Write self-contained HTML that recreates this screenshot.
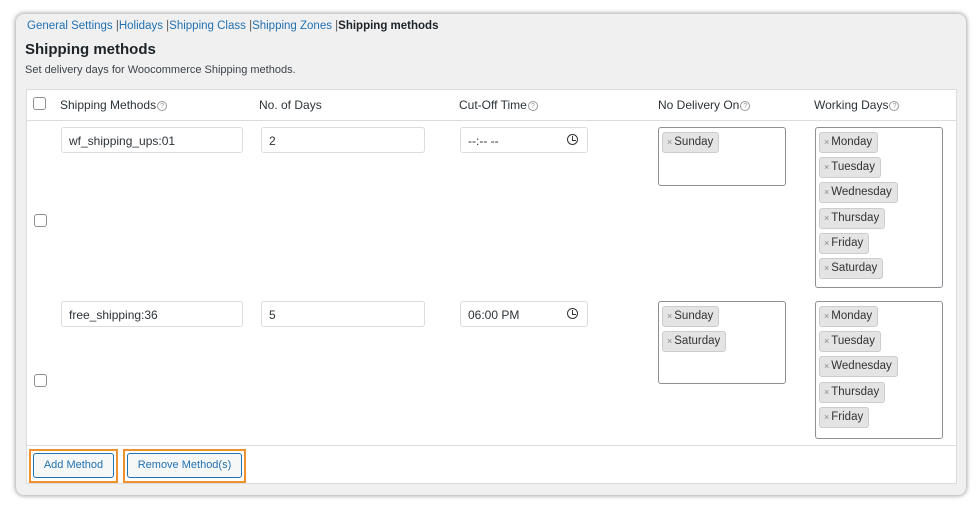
<!DOCTYPE html>
<html><head><meta charset="utf-8"><style>
*{box-sizing:border-box;margin:0;padding:0}
body{width:980px;height:508px;background:#fff;font-family:"Liberation Sans",sans-serif;position:relative;overflow:hidden;color:#1d2327}
.frame{position:absolute;left:16px;top:14px;width:950px;height:481px;background:#f0f0f1;border-radius:8px;box-shadow:0 0 4px 1px rgba(0,0,0,.35)}
.a{position:absolute;white-space:nowrap}
.nav{left:27px;top:20px;font-size:11.5px;color:#555}
.nav span{color:#2271b1}
.nav b{color:#1d2327}
.tbl{position:absolute;left:26px;top:89px;width:931px;height:395px;background:#fff;border:1px solid #dcdcde}
.hl{position:absolute;left:26px;width:931px;height:1px;background:#dcdcde}
.th{font-size:12px;top:98px;color:#2c3338}
.q{display:inline-block;width:10px;height:10px;border:1px solid #999;border-radius:50%;font-size:7px;line-height:9px;text-align:center;color:#999;vertical-align:1px;margin-left:1px}
.cb{position:absolute;width:13px;height:13px;border:1px solid #8c8f94;border-radius:3px;background:#fff}
.in{position:absolute;height:26px;border:1px solid #dcdcde;border-radius:3px;font-size:12px;padding:6px 7px;color:#2c3338;background:#fff}
.sel{position:absolute;border:1px solid #8c8f94;border-radius:3px;background:#fff;padding:4px 0 0 3px}
.tag{display:block;width:max-content;height:21px;margin-bottom:4.2px;background:#e4e4e4;border:1px solid #ccc;border-radius:3px;font-size:11.5px;line-height:19px;padding:0 5px 0 4px;color:#333}
.tag i{font-style:normal;color:#888;font-size:9px;margin-right:2px}
.btn{position:absolute;border:2px solid #f0912f}
.btn div{border:1px solid #2271b1;border-radius:3px;color:#2271b1;font-size:11px;height:25px;line-height:23px;text-align:center;background:#f6f7f7;margin:2px}
.clk{position:absolute;right:9px;top:6px;width:11px;height:11px;border:1.5px solid #333;border-radius:50%}
.clk:after{content:"";position:absolute;left:3.5px;top:1px;width:3px;height:3.5px;border-left:1.3px solid #333;border-bottom:1.3px solid #333}
</style></head><body>
<div class="frame"></div>
<div class="a nav"><span>General Settings</span> |<span>Holidays</span> |<span>Shipping Class</span> |<span>Shipping Zones</span> |<b>Shipping methods</b></div>
<div class="a" style="left:25px;top:41px;font-size:15px;font-weight:bold">Shipping methods</div>
<div class="a" style="left:25px;top:64px;font-size:11px;color:#3c434a">Set delivery days for Woocommerce Shipping methods.</div>
<div class="tbl"></div>
<div class="hl" style="top:120px"></div>
<div class="hl" style="top:445px"></div>
<div class="cb" style="left:33px;top:97px"></div>
<div class="a th" style="left:60px">Shipping Methods<span class="q">?</span></div>
<div class="a th" style="left:259px">No. of Days</div>
<div class="a th" style="left:459px">Cut-Off Time<span class="q">?</span></div>
<div class="a th" style="left:658px">No Delivery On<span class="q">?</span></div>
<div class="a th" style="left:814px">Working Days<span class="q">?</span></div>

<div class="cb" style="left:34px;top:214px"></div>
<div class="in" style="left:61px;top:127px;width:182px">wf_shipping_ups:01</div>
<div class="in" style="left:261px;top:127px;width:164px">2</div>
<div class="in" style="left:460px;top:127px;width:128px">--:-- --<span class="clk"></span></div>
<div class="sel" style="left:658px;top:127px;width:128px;height:59px"><span class="tag"><i>×</i>Sunday</span></div>
<div class="sel" style="left:815px;top:127px;width:128px;height:161px">
<span class="tag"><i>×</i>Monday</span><span class="tag"><i>×</i>Tuesday</span><span class="tag"><i>×</i>Wednesday</span><span class="tag"><i>×</i>Thursday</span><span class="tag"><i>×</i>Friday</span><span class="tag"><i>×</i>Saturday</span></div>

<div class="cb" style="left:34px;top:374px"></div>
<div class="in" style="left:61px;top:301px;width:182px">free_shipping:36</div>
<div class="in" style="left:261px;top:301px;width:164px">5</div>
<div class="in" style="left:460px;top:301px;width:128px">06:00 PM<span class="clk"></span></div>
<div class="sel" style="left:658px;top:301px;width:128px;height:83px"><span class="tag"><i>×</i>Sunday</span><span class="tag"><i>×</i>Saturday</span></div>
<div class="sel" style="left:815px;top:301px;width:128px;height:138px">
<span class="tag"><i>×</i>Monday</span><span class="tag"><i>×</i>Tuesday</span><span class="tag"><i>×</i>Wednesday</span><span class="tag"><i>×</i>Thursday</span><span class="tag"><i>×</i>Friday</span></div>

<div class="btn" style="left:29px;top:449px;width:89px;height:34px"><div>Add Method</div></div>
<div class="btn" style="left:123px;top:449px;width:123px;height:34px"><div>Remove Method(s)</div></div>
</body></html>
